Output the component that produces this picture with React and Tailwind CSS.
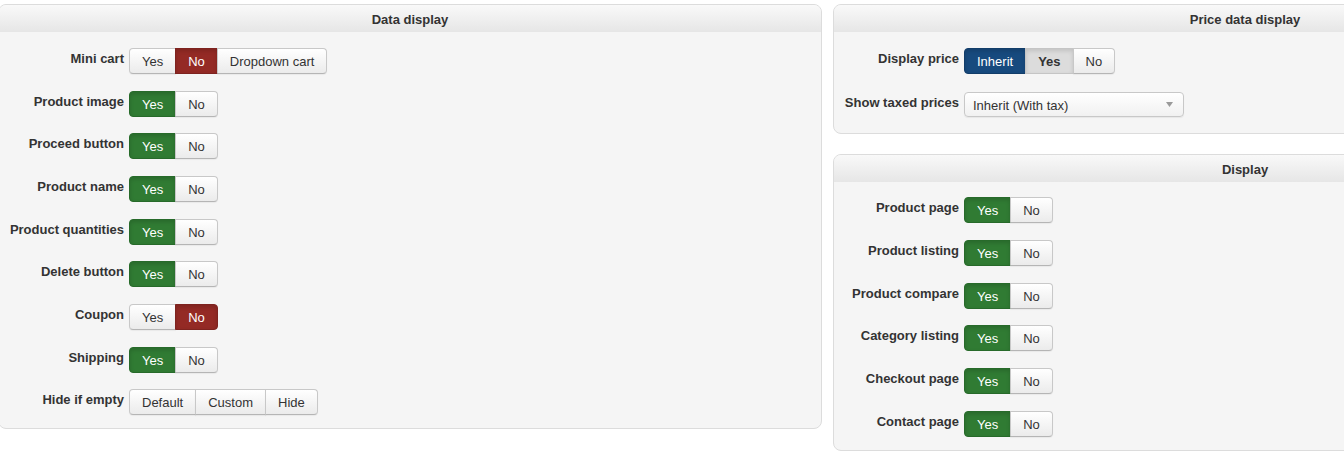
import React from "react";

const FONT = { fontFamily: '"Liberation Sans", Arial, Helvetica, sans-serif' };

const ACTIVE = {
  green: "bg-[#307b33] border-[#276a2a] text-white shadow-[inset_0_2px_4px_rgba(0,0,0,0.15)]",
  red: "bg-[#942a25] border-[#7e231f] text-white shadow-[inset_0_2px_4px_rgba(0,0,0,0.15)]",
  blue: "bg-[#174a7e] border-[#123d69] text-white shadow-[inset_0_2px_4px_rgba(0,0,0,0.15)]",
  gray: "bg-[#dcdcdc] border-[#c5c5c5] text-[#333] font-bold shadow-[inset_0_2px_4px_rgba(0,0,0,0.12)]",
};

const IDLE =
  "bg-linear-to-b from-white to-[#ebebeb] border-[#c8c8c8] border-b-[#b5b5b5] text-[#333] shadow-[0_1px_1px_rgba(0,0,0,0.05)]";

function Seg({ options, active, variant }) {
  return (
    <div className="inline-flex h-[26px]">
      {options.map((o, i) => {
        const isActive = active === i;
        const first = i === 0;
        const last = i === options.length - 1;
        return (
          <div
            key={o}
            className={[
              "h-[26px] px-3 pt-[2px] flex items-center border text-[13px] leading-[20px]",
              first ? "rounded-l-[4px]" : "-ml-px",
              last ? "rounded-r-[4px]" : "",
              isActive ? ACTIVE[variant] : IDLE,
            ].join(" ")}
          >
            {o}
          </div>
        );
      })}
    </div>
  );
}

function Label({ children }) {
  return (
    <div className="w-[125px] text-right text-[13px] font-bold text-[#333] leading-[20px] pt-[1px] shrink-0">
      {children}
    </div>
  );
}

function Row({ label, children }) {
  return (
    <div className="flex items-start h-[26px]">
      <Label>{label}</Label>
      <div className="ml-[5px]">{children}</div>
    </div>
  );
}

function Panel({ title, children }) {
  return (
    <div className="w-[824px] border border-[#dcdcdc] rounded-[8px] bg-[#f5f5f5] overflow-hidden">
      <div className="h-[27px] pt-[2px] bg-linear-to-b from-[#f9f9f9] to-[#e6e6e6] flex items-center justify-center text-[13px] font-bold text-[#333]">
        {title}
      </div>
      {children}
    </div>
  );
}

const YN = ["Yes", "No"];

export default function App() {
  return (
    <div className="w-[1344px] h-[470px] overflow-hidden bg-white" style={FONT}>
      <div className="flex items-start gap-[11px] ml-[-2px] pt-[4px] w-[1700px]">
        <Panel title="Data display">
          <div className="flex flex-col gap-[16.67px] pt-[16px] pb-[13px]">
            <Row label="Mini cart">
              <Seg options={["Yes", "No", "Dropdown cart"]} active={1} variant="red" />
            </Row>
            <Row label="Product image">
              <Seg options={YN} active={0} variant="green" />
            </Row>
            <Row label="Proceed button">
              <Seg options={YN} active={0} variant="green" />
            </Row>
            <Row label="Product name">
              <Seg options={YN} active={0} variant="green" />
            </Row>
            <Row label="Product quantities">
              <Seg options={YN} active={0} variant="green" />
            </Row>
            <Row label="Delete button">
              <Seg options={YN} active={0} variant="green" />
            </Row>
            <Row label="Coupon">
              <Seg options={YN} active={1} variant="red" />
            </Row>
            <Row label="Shipping">
              <Seg options={YN} active={0} variant="green" />
            </Row>
            <Row label="Hide if empty">
              <Seg options={["Default", "Custom", "Hide"]} active={-1} variant="gray" />
            </Row>
          </div>
        </Panel>

        <div className="flex flex-col gap-[20px]">
          <Panel title="Price data display">
            <div className="flex flex-col gap-[18px] pt-[16px] pb-[16px]">
              <Row label="Display price">
                <div className="inline-flex h-[26px]">
                  <div className={"h-[26px] px-3 pt-[2px] flex items-center border text-[13px] leading-[20px] rounded-l-[4px] " + ACTIVE.blue}>Inherit</div>
                  <div className={"h-[26px] px-3 pt-[2px] flex items-center border -ml-px text-[13px] leading-[20px] " + ACTIVE.gray}>Yes</div>
                  <div className={"h-[26px] px-3 pt-[2px] flex items-center border -ml-px rounded-r-[4px] text-[13px] leading-[20px] " + IDLE}>No</div>
                </div>
              </Row>
              <div className="flex items-start h-[25px]">
                <Label>Show taxed prices</Label>
                <div className="ml-[5px] w-[220px] h-[25px] border border-[#c8c8c8] rounded-[4px] bg-linear-to-b from-white to-[#f1f1f1] shadow-[0_1px_1px_rgba(0,0,0,0.06)] flex items-center justify-between pl-2 pr-[10px] text-[13px] text-[#333]">
                  <span className="leading-[20px] pt-[3px]">Inherit (With tax)</span>
                  <svg width="7" height="5" viewBox="0 0 7 5">
                    <polygon points="0,0 7,0 3.5,5" fill="#9a9a9a" />
                  </svg>
                </div>
              </div>
            </div>
          </Panel>

          <Panel title="Display">
            <div className="flex flex-col gap-[16.8px] pt-[15px] pb-[13px]">
              <Row label="Product page">
                <Seg options={YN} active={0} variant="green" />
              </Row>
              <Row label="Product listing">
                <Seg options={YN} active={0} variant="green" />
              </Row>
              <Row label="Product compare">
                <Seg options={YN} active={0} variant="green" />
              </Row>
              <Row label="Category listing">
                <Seg options={YN} active={0} variant="green" />
              </Row>
              <Row label="Checkout page">
                <Seg options={YN} active={0} variant="green" />
              </Row>
              <Row label="Contact page">
                <Seg options={YN} active={0} variant="green" />
              </Row>
            </div>
          </Panel>
        </div>
      </div>
    </div>
  );
}
